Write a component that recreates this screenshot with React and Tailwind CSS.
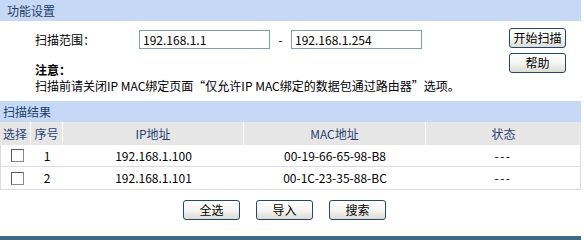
import React from "react";

const font = { fontFamily: '"Noto Sans CJK SC", "Liberation Sans", sans-serif' };

function Btn({ children }) {
  return (
    <button className="h-[20px] w-[57px] rounded-[3px] border border-[#27456a] bg-gradient-to-b from-white via-[#f6f6f3] to-[#dcdcd4] text-[12px] leading-[18px] text-black">
      {children}
    </button>
  );
}

function Check() {
  return (
    <span className="inline-block h-[13px] w-[13px] border border-[#8a8a8a] border-l-[#5a5a5a] border-t-[#5a5a5a] bg-white" />
  );
}

export default function App() {
  const rows = [
    { n: 1, ip: "192.168.1.100", mac: "00-19-66-65-98-B8" },
    { n: 2, ip: "192.168.1.101", mac: "00-1C-23-35-88-BC" },
  ];
  return (
    <div className="h-[240px] w-[584px] bg-white text-[12px] text-black" style={font}>
      <div className="flex w-[581px] flex-col">
        <div className="h-[21px] bg-[#c5d9f7] pl-[7px] leading-[21px] text-[#1f3d66]">功能设置</div>
        <div className="flex h-[80px]">
          <div className="flex flex-1 flex-col pl-[35px]">
            <div className="mt-[9px] flex h-[19px] items-center">
              <span className="w-[104px]">扫描范围：</span>
              <input
                readOnly
                value="192.168.1.1"
                className="h-[19px] w-[131px] border border-[#7f9db9] px-[3px] text-[12px] leading-[17px] outline-none"
              />
              <span className="w-[21px] text-center">-</span>
              <input
                readOnly
                value="192.168.1.254"
                className="h-[19px] w-[131px] border border-[#7f9db9] px-[3px] text-[12px] leading-[17px] outline-none"
              />
            </div>
            <div className="mt-[13px] font-bold leading-[16px]">注意：</div>
            <div className="leading-[16px]">扫描前请关闭IP MAC绑定页面“仅允许IP MAC绑定的数据包通过路由器”选项。</div>
          </div>
          <div className="flex flex-col gap-[5px] pr-[15px] pt-[7px]">
            <Btn>开始扫描</Btn>
            <Btn>帮助</Btn>
          </div>
        </div>
        <div className="h-[21px] bg-[#c5d9f7] pl-[3px] leading-[21px] text-[#1f3d66]">扫描结果</div>
        <div className="flex h-[23px] bg-[#e6e6e6] text-[#2a4272]">
          <div className="flex w-[31px] items-center justify-center border-r border-white">选择</div>
          <div className="flex w-[32px] items-center justify-center border-r border-white">序号</div>
          <div className="flex w-[181px] items-center justify-center border-r border-white">IP地址</div>
          <div className="flex w-[182px] items-center justify-center border-r border-white">MAC地址</div>
          <div className="flex flex-1 items-center justify-center">状态</div>
        </div>
        <div className="border-x border-b border-[#dcdcdc]">
          {rows.map((r, i) => (
            <div key={r.n} className={`flex h-[22px] ${i === 0 ? "border-b border-[#dcdcdc]" : ""}`}>
              <div className="flex w-[30px] items-center justify-center pl-[2px]">
                <Check />
              </div>
              <div className="flex w-[32px] items-center justify-center">{r.n}</div>
              <div className="flex w-[181px] items-center justify-center">{r.ip}</div>
              <div className="flex w-[182px] items-center justify-center">{r.mac}</div>
              <div className="flex flex-1 items-center justify-center tracking-[1.5px]">---</div>
            </div>
          ))}
        </div>
        <div className="mt-[10px] flex h-[20px] gap-[16px] pl-[183px]">
          <Btn>全选</Btn>
          <Btn>导入</Btn>
          <Btn>搜索</Btn>
        </div>
        <div className="mt-[6px] h-[10px] bg-gradient-to-b from-white to-[#fffdf0]" />
        <div className="h-[4px] bg-[#3e6a84]" />
      </div>
    </div>
  );
}
